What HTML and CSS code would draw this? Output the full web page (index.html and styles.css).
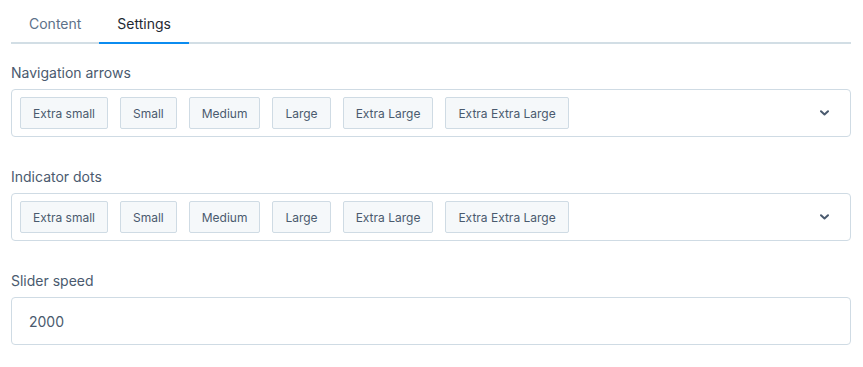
FILE: index.html
```html
<!DOCTYPE html>
<html lang="en">
<head>
    <meta charset="UTF-8">
    <title>Settings</title>
    <link rel="stylesheet" href="styles.css">
</head>
<body>
    <div class="panel">
        <div class="tabs">
            <div class="tab">Content</div>
            <div class="tab active">Settings</div>
        </div>

        <div class="field">
            <label class="field-label">Navigation arrows</label>
            <div class="select">
                <div class="chips">
                    <span class="chip">Extra small</span>
                    <span class="chip">Small</span>
                    <span class="chip">Medium</span>
                    <span class="chip">Large</span>
                    <span class="chip">Extra Large</span>
                    <span class="chip">Extra Extra Large</span>
                </div>
                <svg class="chevron" width="9" height="6" viewBox="0 0 9 6"><path d="M1 1.2l3.5 3.3L8 1.2" fill="none" stroke="#4a5a6e" stroke-width="2" stroke-linecap="round" stroke-linejoin="round"/></svg>
            </div>
        </div>

        <div class="field">
            <label class="field-label">Indicator dots</label>
            <div class="select">
                <div class="chips">
                    <span class="chip">Extra small</span>
                    <span class="chip">Small</span>
                    <span class="chip">Medium</span>
                    <span class="chip">Large</span>
                    <span class="chip">Extra Large</span>
                    <span class="chip">Extra Extra Large</span>
                </div>
                <svg class="chevron" width="9" height="6" viewBox="0 0 9 6"><path d="M1 1.2l3.5 3.3L8 1.2" fill="none" stroke="#4a5a6e" stroke-width="2" stroke-linecap="round" stroke-linejoin="round"/></svg>
            </div>
        </div>

        <div class="field">
            <label class="field-label">Slider speed</label>
            <input class="text-input" type="text" value="2000">
        </div>
    </div>
</body>
</html>
```

FILE: styles.css
```css
* {
    margin: 0;
    padding: 0;
    box-sizing: border-box;
}

body {
    font-family: Inter, 'Noto Sans', sans-serif;
    background: #fff;
    color: #4a5a6e;
    font-size: 14px;
}

.panel {
    padding: 0 12px 0 11px;
}

.tabs {
    display: flex;
    border-bottom: 2px solid #d2dee5;
    margin-bottom: 19px;
}

.tab {
    padding: 14px 18px 8px;
    line-height: 20px;
    color: #5d7189;
    margin-bottom: -2px;
    border-bottom: 2px solid transparent;
}

.tab.active {
    color: #1f2933;
    border-bottom-color: #0b8cf0;
}

.field {
    margin-bottom: 30px;
}

.field-label {
    display: block;
    line-height: 20px;
    margin-bottom: 6px;
    color: #4a5a6e;
}

.select {
    display: flex;
    align-items: center;
    height: 48px;
    padding: 0 21px 0 8px;
    border: 1px solid #cfdbe4;
    border-radius: 4px;
}

.chips {
    display: flex;
    gap: 12px;
    flex: 1;
}

.chip {
    display: flex;
    align-items: center;
    height: 32px;
    padding: 0 12px;
    font-size: 12px;
    color: #4a5a6e;
    background: #f5f8fa;
    border: 1px solid #cfdbe4;
    border-radius: 2px;
}

.chevron {
    display: block;
}

.text-input {
    display: block;
    width: 100%;
    height: 48px;
    padding: 0 17px;
    font-family: inherit;
    font-size: 14px;
    color: #4a5a6e;
    border: 1px solid #cfdbe4;
    border-radius: 4px;
    outline: none;
}
```
